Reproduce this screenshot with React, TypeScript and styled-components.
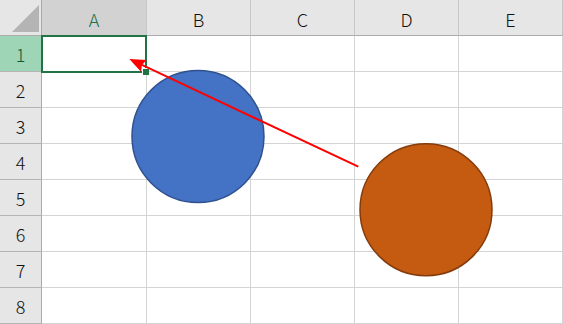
import React from "react";
import styled, { createGlobalStyle } from "styled-components";

const GlobalStyle = createGlobalStyle`
  html, body { margin: 0; padding: 0; background: #ffffff; overflow: hidden; }
  body { font-family: "Noto Sans CJK JP", "Noto Sans", sans-serif; }
`;

const Sheet = styled.div`
  position: relative;
  width: 563px;
  height: 324px;
  overflow: hidden;
  background: #ffffff;
`;

const Grid = styled.div`
  display: grid;
  grid-template-columns: 42px 105px 104px 104px 104px 104px;
  grid-template-rows: 36px repeat(8, 36px);
`;

const Corner = styled.div`
  position: relative;
  background: #e6e6e6;
  border-right: 1px solid #ababab;
  border-bottom: 1px solid #ababab;
`;

const CornerTriangle = styled.svg`
  position: absolute;
  left: 0;
  top: 0;
`;

const ColHeader = styled.div<{ $active?: boolean }>`
  display: flex;
  align-items: center;
  justify-content: center;
  background: ${(p) => (p.$active ? "#d2d2d2" : "#e6e6e6")};
  color: ${(p) => (p.$active ? "#217346" : "#111111")};
  border-right: 1px solid #c6c6c6;
  border-bottom: 1px solid #ababab;
  font-size: 18px;
  font-weight: 300;
  line-height: 1;
  padding-top: 2px;
  box-sizing: border-box;
`;

const RowHeader = styled.div<{ $active?: boolean }>`
  display: flex;
  align-items: center;
  justify-content: center;
  background: ${(p) => (p.$active ? "#9fd5b7" : "#e6e6e6")};
  color: ${(p) => (p.$active ? "#0f5a30" : "#111111")};
  border-right: 1px solid #ababab;
  border-bottom: 1px solid #b4b4b4;
  font-size: 18px;
  font-weight: 300;
  line-height: 1;
  box-sizing: border-box;
`;

const Cell = styled.div`
  border-right: 1px solid #d4d4d4;
  border-bottom: 1px solid #d4d4d4;
  box-sizing: border-box;
  background: #ffffff;
`;

const Selection = styled.div`
  position: absolute;
  left: 41px;
  top: 35px;
  width: 106px;
  height: 38px;
  box-sizing: border-box;
  border: 2px solid #217346;
  pointer-events: none;
`;

const FillHandle = styled.div`
  position: absolute;
  left: 143px;
  top: 69px;
  width: 6px;
  height: 6px;
  background: #217346;
  box-shadow: -1px -1px 0 0 #ffffff;
`;

const Shapes = styled.svg`
  position: absolute;
  left: 0;
  top: 0;
  pointer-events: none;
`;

const cols = ["A", "B", "C", "D", "E"];
const rows = [1, 2, 3, 4, 5, 6, 7, 8];

// arrow geometry
const tip = { x: 129.3, y: 59 };
const tail = { x: 358.3, y: 166.7 };
const dx = tail.x - tip.x;
const dy = tail.y - tip.y;
const len = Math.hypot(dx, dy);
const ux = dx / len;
const uy = dy / len;
const nx = -uy;
const ny = ux;
const headLen = 16;
const headHalf = 6.5;
const baseX = tip.x + ux * headLen;
const baseY = tip.y + uy * headLen;
const notchX = tip.x + ux * (headLen - 2);
const notchY = tip.y + uy * (headLen - 2);
const headPoints = [
  `${tip.x},${tip.y}`,
  `${baseX + nx * headHalf},${baseY + ny * headHalf}`,
  `${notchX},${notchY}`,
  `${baseX - nx * headHalf},${baseY - ny * headHalf}`,
].join(" ");

export default function App() {
  return (
    <>
      <GlobalStyle />
      <Sheet>
        <Grid>
          <Corner>
            <CornerTriangle width="42" height="36" viewBox="0 0 42 36">
              <polygon points="39,5 39,32 12,32" fill="#b4b4b4" />
            </CornerTriangle>
          </Corner>
          {cols.map((c) => (
            <ColHeader key={c} $active={c === "A"}>
              {c}
            </ColHeader>
          ))}
          {rows.map((r) => (
            <React.Fragment key={r}>
              <RowHeader $active={r === 1}>{r}</RowHeader>
              {cols.map((c) => (
                <Cell key={c} />
              ))}
            </React.Fragment>
          ))}
        </Grid>
        <Selection />
        <FillHandle />
        <Shapes width="563" height="324" viewBox="0 0 563 324">
          <circle cx="198" cy="136.5" r="66" fill="#4472c4" stroke="#2f528f" strokeWidth="1.5" />
          <circle cx="426" cy="209.7" r="66" fill="#c55a11" stroke="#843c0c" strokeWidth="1.5" />
          <line
            x1={tail.x}
            y1={tail.y}
            x2={notchX}
            y2={notchY}
            stroke="#ff0000"
            strokeWidth="2"
          />
          <polygon points={headPoints} fill="#ff0000" />
        </Shapes>
      </Sheet>
    </>
  );
}
